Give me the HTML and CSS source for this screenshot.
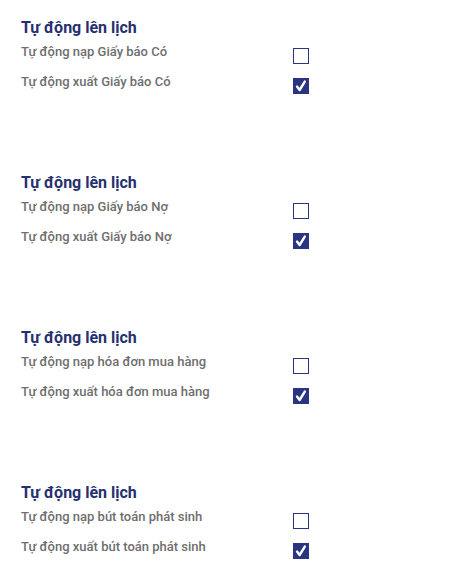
FILE: index.html
```html
<!DOCTYPE html>
<html lang="vi">
<head>
    <meta charset="UTF-8">
    <meta name="viewport" content="width=device-width, initial-scale=1.0">
    <title>Tự động lên lịch</title>
    <link rel="stylesheet" href="styles.css">
</head>
<body>

    <!-- Giấy báo Có -->
    <div class="section">
        <h3 class="title">Tự động lên lịch</h3>
        <div class="row">
            <span class="label">Tự động nạp Giấy báo Có</span>
            <span class="box"></span>
        </div>
        <div class="row">
            <span class="label">Tự động xuất Giấy báo Có</span>
            <span class="box checked"><svg viewBox="0 0 16 16"><path d="M4 8.6 L6.6 12 L11.8 3.6" /></svg></span>
        </div>
    </div>

    <!-- Giấy báo Nợ -->
    <div class="section">
        <h3 class="title">Tự động lên lịch</h3>
        <div class="row">
            <span class="label">Tự động nạp Giấy báo Nợ</span>
            <span class="box"></span>
        </div>
        <div class="row">
            <span class="label">Tự động xuất Giấy báo Nợ</span>
            <span class="box checked"><svg viewBox="0 0 16 16"><path d="M4 8.6 L6.6 12 L11.8 3.6" /></svg></span>
        </div>
    </div>

    <!-- Hóa đơn mua hàng -->
    <div class="section">
        <h3 class="title">Tự động lên lịch</h3>
        <div class="row">
            <span class="label">Tự động nạp hóa đơn mua hàng</span>
            <span class="box"></span>
        </div>
        <div class="row">
            <span class="label">Tự động xuất hóa đơn mua hàng</span>
            <span class="box checked"><svg viewBox="0 0 16 16"><path d="M4 8.6 L6.6 12 L11.8 3.6" /></svg></span>
        </div>
    </div>

    <!-- Bút toán phát sinh -->
    <div class="section">
        <h3 class="title">Tự động lên lịch</h3>
        <div class="row">
            <span class="label">Tự động nạp bút toán phát sinh</span>
            <span class="box"></span>
        </div>
        <div class="row">
            <span class="label">Tự động xuất bút toán phát sinh</span>
            <span class="box checked"><svg viewBox="0 0 16 16"><path d="M4 8.6 L6.6 12 L11.8 3.6" /></svg></span>
        </div>
    </div>

</body>
</html>
```

FILE: styles.css
```css
/* Page */
body {
    font-family: Roboto, 'Liberation Sans', sans-serif;
    background: #fff;
    margin: 0;
    padding: 18px 0 0 21px;
}

/* Section */
.section {
    width: 288px;
    height: 155px;
}

.section:last-child {
    height: auto;
}

.title {
    margin: 0 0 6px;
    font-size: 16px;
    line-height: 20px;
    font-weight: bold;
    color: #27306f;
}

/* Rows */
.row {
    display: flex;
    justify-content: space-between;
    align-items: flex-start;
    height: 30px;
}

.label {
    font-size: 13px;
    line-height: 16px;
    font-weight: 500;
    color: #6e6e6e;
}

/* Checkbox */
.box {
    display: block;
    box-sizing: border-box;
    width: 16px;
    height: 16px;
    margin-top: 4px;
    border: 1.5px solid #2b3480;
    background: #fff;
}

.box.checked {
    background: #2b3480;
    border: none;
}

.box svg {
    display: block;
    width: 16px;
    height: 16px;
    fill: none;
    stroke: #fff;
    stroke-width: 2.4;
    stroke-linecap: round;
    stroke-linejoin: round;
}
```
